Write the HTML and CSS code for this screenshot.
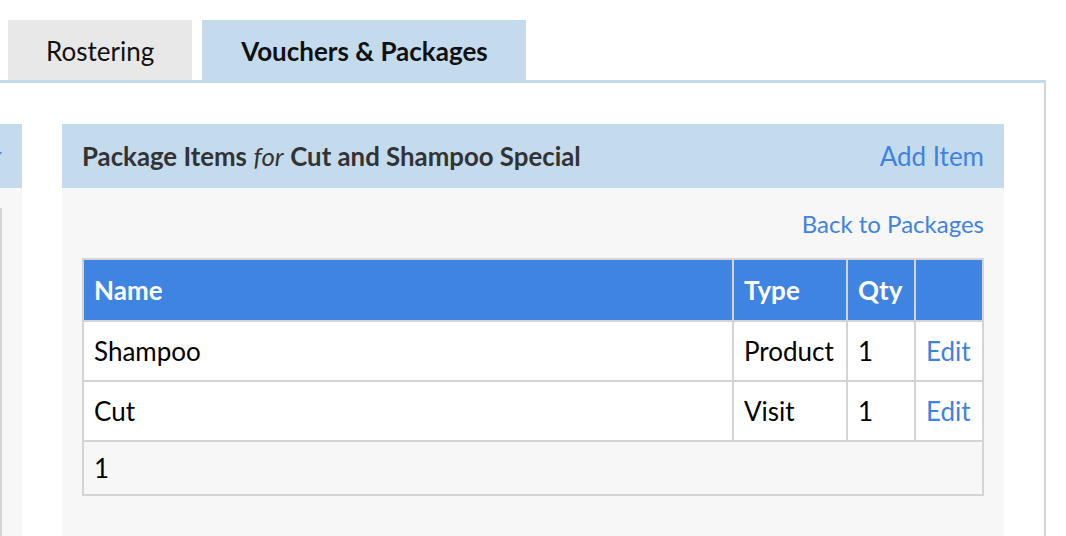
FILE: index.html
```html
<!DOCTYPE html>
<html>
<head>
<meta charset="utf-8">
<link rel="stylesheet" href="styles.css">
</head>
<body>
<div class="tabs">
  <div class="tab">Rostering</div>
  <div class="tab active">Vouchers &amp; Packages</div>
</div>
<div class="content">
  <div class="side">
    <div class="panel-head side-head">
      <svg class="caret" width="10" height="7" viewBox="0 0 10 7"><path d="M0 0H10L5 7Z" fill="#3e84e0"/></svg>
    </div>
    <div class="side-body"><div class="side-table"></div></div>
  </div>
  <div class="panel">
    <div class="panel-head">
      <div class="title"><b>Package Items</b> <i>for</i> <b>Cut and Shampoo Special</b></div>
      <a class="link">Add Item</a>
    </div>
    <div class="panel-body">
      <div class="back"><a class="link">Back to Packages</a></div>
      <table class="items">
        <colgroup><col><col class="c-type"><col class="c-qty"><col class="c-act"></colgroup>
        <thead>
          <tr><th>Name</th><th>Type</th><th>Qty</th><th></th></tr>
        </thead>
        <tbody>
          <tr><td>Shampoo</td><td>Product</td><td>1</td><td><a class="link">Edit</a></td></tr>
          <tr><td>Cut</td><td>Visit</td><td>1</td><td><a class="link">Edit</a></td></tr>
        </tbody>
        <tfoot>
          <tr><td colspan="4">1</td></tr>
        </tfoot>
      </table>
    </div>
  </div>
</div>
</body>
</html>
```
FILE: styles.css
```css
html, body {
  margin: 0;
  padding: 0;
  background: #fff;
  font-family: Lato, "Open Sans", sans-serif;
  color: #000;
  overflow: hidden;
}
.tabs {
  display: flex;
  gap: 10px;
  padding: 20px 0 0 8px;
  width: 1038px;
  border-bottom: 3px solid #c4dbed;
}
.tab {
  height: 60px;
  line-height: 62px;
  padding: 0 38px;
  background: #e8e8e8;
  font-size: 26px;
  color: #111;
}
.tab.active {
  background: #c4dbed;
  font-weight: bold;
  padding: 0 38px 0 39px;
}
.content {
  display: flex;
  gap: 40px;
  width: 1046px;
  box-sizing: border-box;
  padding: 41px 40px 0 0;
  border-right: 2px solid #d4d4d4;
  height: 460px;
}
.side {
  width: 22px;
  flex-shrink: 0;
  display: flex;
  flex-direction: column;
}
.panel-head {
  height: 64px;
  background: #c4dbed;
  display: flex;
  align-items: center;
  justify-content: space-between;
  padding: 0 20px;
  font-size: 26px;
}
.side-head {
  justify-content: flex-end;
  padding: 0 20px 0 0;
}
.caret {
  flex-shrink: 0;
  margin-top: -2px;
}
.side-body {
  flex: 1;
  background: #f7f7f7;
  padding: 20px 20px 0 0;
}
.side-table {
  width: 0;
  height: 100%;
  border-right: 2px solid #d4d4d4;
}
.panel {
  flex: 1;
  display: flex;
  flex-direction: column;
}
.title {
  color: #333;
  font-size: 25.8px;
}
.title i {
  font-weight: normal;
}
.link {
  color: #3f82df;
  text-decoration: none;
}
.panel-body {
  flex: 1;
  background: #f7f7f7;
  padding: 21px 20px 0;
}
.back {
  text-align: right;
  font-size: 24px;
  line-height: 30px;
  margin-bottom: 19px;
}
.items {
  width: 100%;
  table-layout: fixed;
  border-collapse: separate;
  border-spacing: 0;
  border-top: 2px solid #d4d4d4;
  border-left: 2px solid #d4d4d4;
  font-size: 26px;
  line-height: 30px;
}
.c-type { width: 114px; }
.c-qty { width: 68px; }
.c-act { width: 68px; }
.items th, .items td {
  text-align: left;
  padding: 14px 10px;
  border-right: 2px solid #d4d4d4;
  border-bottom: 2px solid #d4d4d4;
  white-space: nowrap;
  overflow: hidden;
}
.items th {
  background: #3e84e0;
  color: #fff;
  font-weight: bold;
  padding: 15px 10px;
}
.items tbody td {
  background: #fff;
}
.items tfoot td {
  background: #f7f7f7;
  padding: 11px 10px;
}
```
